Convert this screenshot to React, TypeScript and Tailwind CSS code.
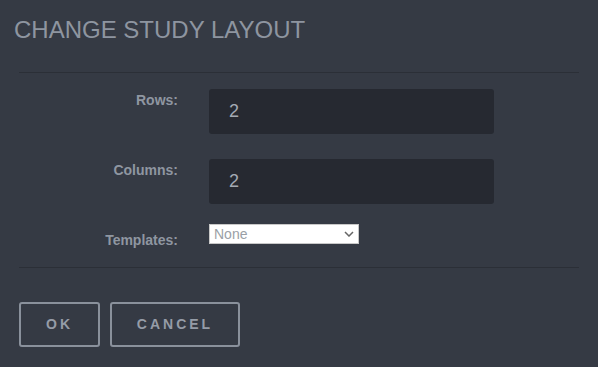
import React from "react";

function Field({ label, value }: { label: string; value: string }) {
  return (
    <div className="flex items-start">
      <div className="w-[159px] pt-[1px] text-right text-[14px] leading-5 font-bold text-[#8f96a1]">{label}</div>
      <div className="ml-[31px] flex h-[45px] w-[285px] items-center rounded-[3px] bg-[#262931] pl-[20px] text-[18px] text-[#a3a9b3]">
        {value}
      </div>
    </div>
  );
}

export default function App() {
  return (
    <div className="h-[367px] w-[598px] bg-[#353a44] font-['Liberation_Sans',Arial,sans-serif]">
      <h1 className="pl-[14px] pt-[18px] text-[24px] leading-6 font-normal text-[#8e95a0]">CHANGE STUDY LAYOUT</h1>
      <div className="mx-[19px] mt-[30px] border-t border-[#2b2f37]" />
      <div className="mx-[19px] flex flex-col pt-[16px]">
        <Field label="Rows:" value="2" />
        <div className="mt-[25px]">
          <Field label="Columns:" value="2" />
        </div>
        <div className="mt-[20px] flex items-start">
          <div className="mt-[6px] w-[159px] text-right text-[14px] leading-5 font-bold text-[#8f96a1]">Templates:</div>
          <div className="ml-[31px] flex h-[20px] w-[150px] items-center justify-between border border-[#c8c8c8] bg-white pl-[4px] pr-[4px] text-[14px] leading-4 text-[#9a9fa6]">
            <span>None</span>
            <svg width="10" height="6" viewBox="0 0 10 6">
              <path d="M1 1 L5 5 L9 1" fill="none" stroke="#666" strokeWidth="1.5" />
            </svg>
          </div>
        </div>
      </div>
      <div className="mx-[19px] mt-[17px] border-t border-[#2b2f37]" />
      <div className="mx-[19px] mt-[34px] flex gap-[10px]">
        <button className="flex h-[45px] w-[81px] items-center justify-center rounded-[3px] border-2 border-[#8a919c] text-[14px] font-bold tracking-[3px] text-[#959ca7]">
          OK
        </button>
        <button className="flex h-[45px] w-[130px] items-center justify-center rounded-[3px] border-2 border-[#8a919c] text-[14px] font-bold tracking-[3px] text-[#959ca7]">
          CANCEL
        </button>
      </div>
    </div>
  );
}
